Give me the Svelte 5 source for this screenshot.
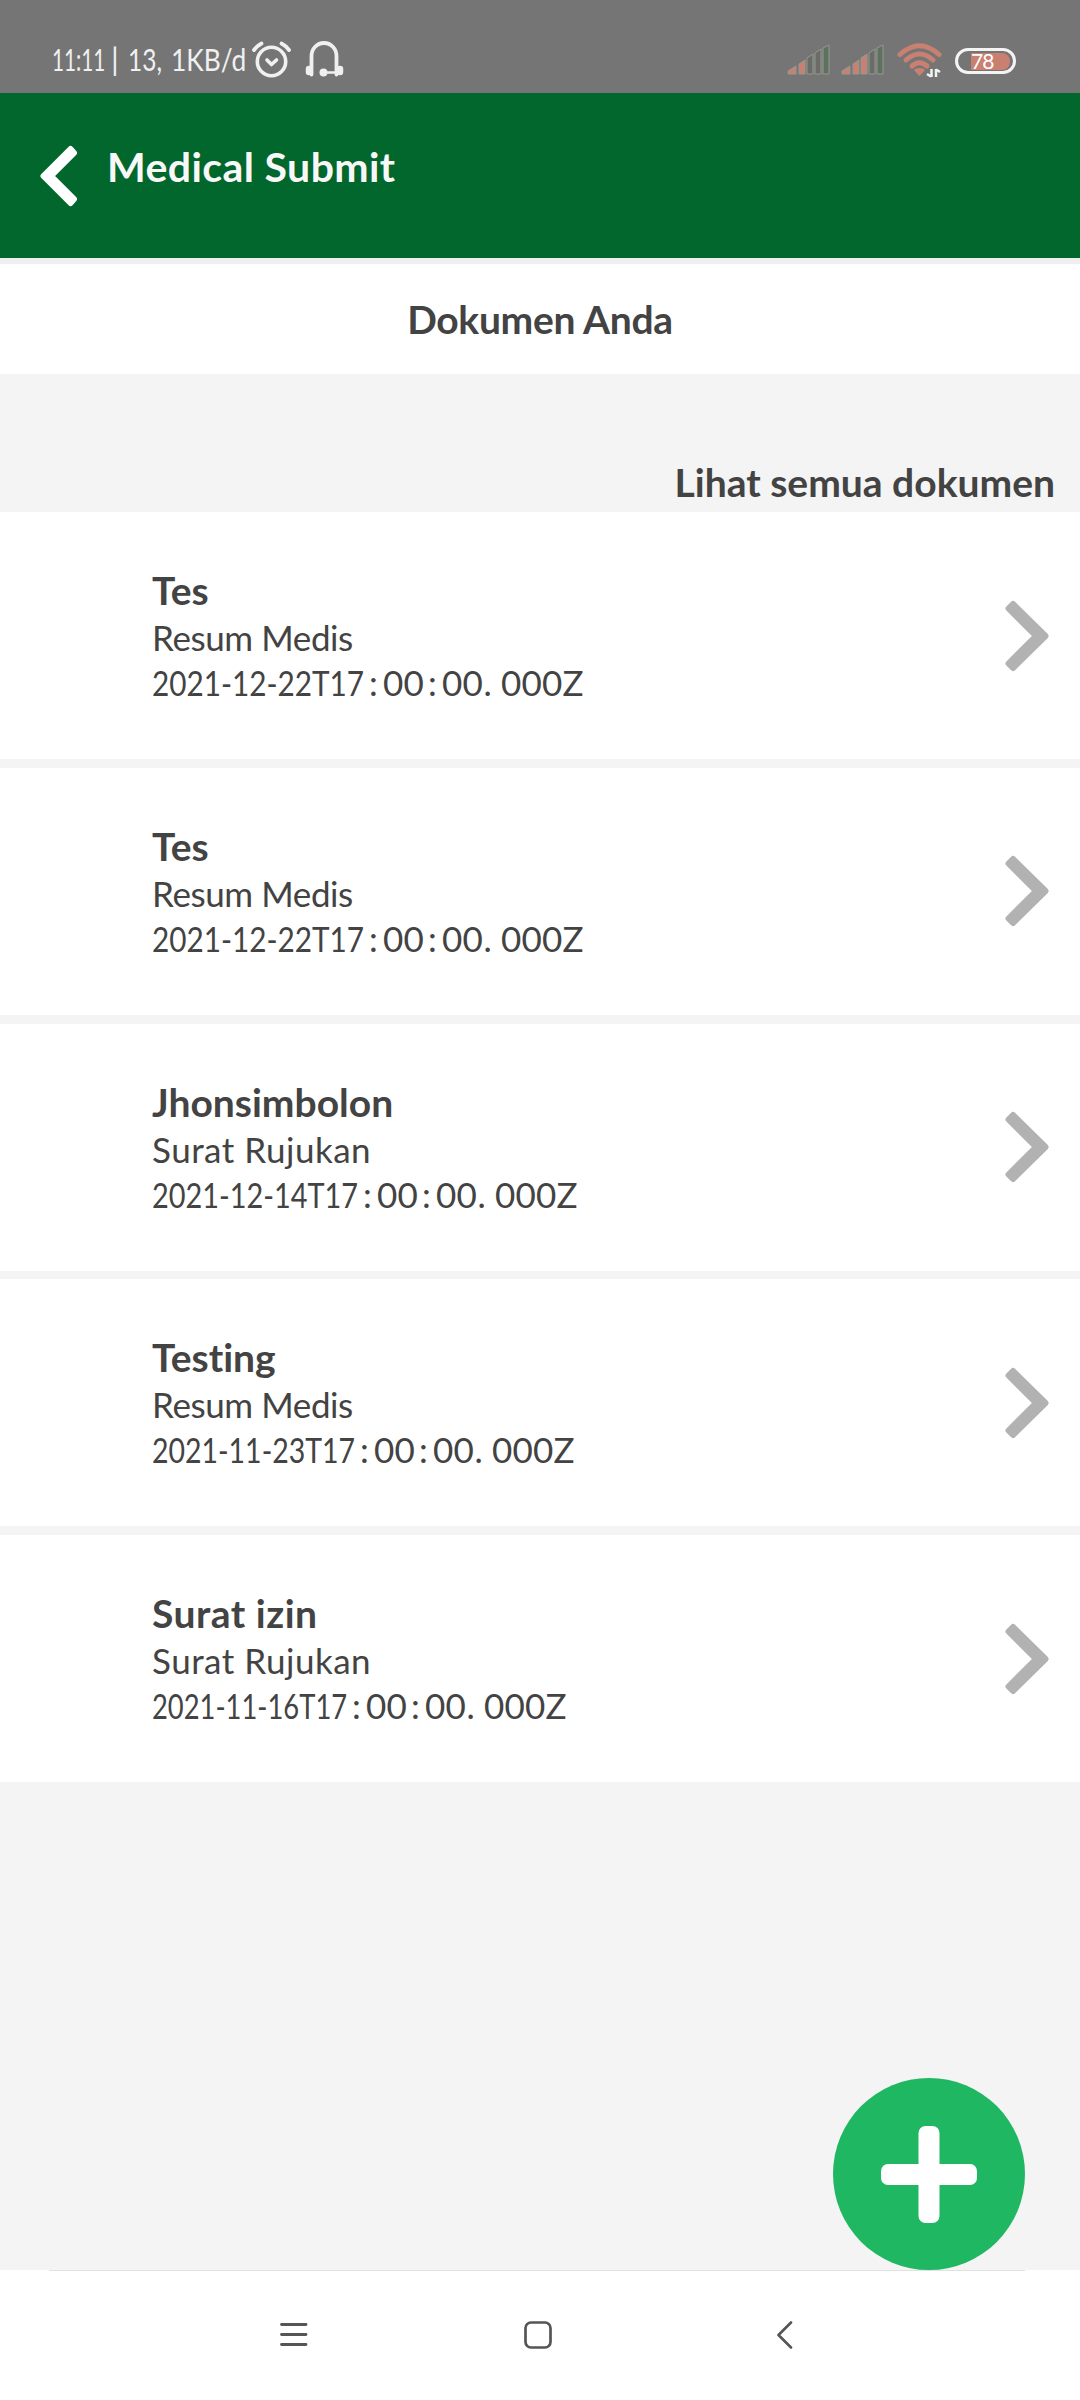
<script>
    // width = drawn length of the day part of the date
    let documents = [
        { name: "Tes", type: "Resum Medis", day: "2021-12-22T17", width: 212 },
        { name: "Tes", type: "Resum Medis", day: "2021-12-22T17", width: 212 },
        { name: "Jhonsimbolon", type: "Surat Rujukan", day: "2021-12-14T17", width: 206 },
        { name: "Testing", type: "Resum Medis", day: "2021-11-23T17", width: 203 },
        { name: "Surat izin", type: "Surat Rujukan", day: "2021-11-16T17", width: 195 }
    ];

    // length of the day at its normal width
    let fullWidth = 249.5;
    let time = ":00:00. 000Z";
    let timeOffsets = [5, 19, 39.5, 64, 78, 98.5, 119.5, 129, 137, 157.5, 178, 198.5];

    // first bars in use, the rest dimmed
    let signals = [2, 3];
    let bars = [
        "M1 30v-3l8-5v8z",
        "M12 30V20l6-4v14z",
        "M20 30V14l6-4v20z",
        "M28 30V9l6-4v25z",
        "M36 30V4l6-3v29z"
    ];
</script>

<div class="screen">
    <div class="status">
        <svg class="clock" width="193" height="42" viewBox="0 0 193 42" fill="#f0f0f0">
            <text transform="translate(0 31) scale(0.67 1)">11:11</text>
            <text transform="translate(59 31)">|</text>
            <text transform="translate(76 31) scale(0.79 1)">13,</text>
            <text transform="translate(119 31) scale(0.85 1)">1KB/d</text>
        </svg>
        <svg class="alarm" width="40" height="40" viewBox="0 0 40 40" fill="none" stroke="#f0f0f0" stroke-linecap="round">
            <circle cx="20.5" cy="21.5" r="14.2" stroke-width="3.6" />
            <path d="M16 20l4.500 4.500L25.500 20" stroke-width="3.600" stroke-linejoin="round" />
            <path d="M3 10Q6.500 5.500 10.500 3.500M38 10Q34.500 5.500 30.500 3.500" stroke-width="3.800" />
        </svg>
        <svg class="headset" width="39" height="38" viewBox="0 0 39 38" fill="none" stroke="#f0f0f0" stroke-linecap="round">
            <path d="M6.500 33.500V15a12.500 13 0 0 1 25 0v18.500" stroke-width="3.800" />
            <path d="M4 28v3M35 28v3" stroke-width="6.500" />
            <path d="M19 31.500h12" stroke-width="2.500" />
            <circle cx="18.500" cy="31.500" r="4" fill="#f0f0f0" stroke="none" />
        </svg>
        <div class="right">
            {#each signals as level}
                <svg class="signal" width="44" height="32" viewBox="0 0 44 32">
                    {#each bars as d, i}
                        <path {d} fill={i < level ? "#c98071" : i == 4 ? "#60705f" : "#6d6b66"} stroke="#929a92" stroke-width="1" stroke-linejoin="round" />
                    {/each}
                </svg>
            {/each}
            <svg class="wifi" width="46" height="36" viewBox="0 0 46 36" fill="none" stroke="#c98071" stroke-linecap="round">
                <path d="M3 11.500Q22.500-6 42 11.500" stroke-width="5" />
                <path d="M9 17Q22.500 5 36 17" stroke-width="5" />
                <path d="M15 23Q22.500 16.500 30 23" stroke-width="5" />
                <path d="M18 27q4.500-2.500 9 0l-4.500 5z" fill="#c98071" stroke-width="1.500" stroke-linejoin="round" />
                <path d="M34.500 26v8M30 31l4 2.500M39 34v-8M39 26.500l4 2.500" stroke="#f2f2f2" stroke-width="2.500" stroke-linecap="butt" />
            </svg>
            <div class="battery"><span>78</span></div>
        </div>
    </div>

    <header>
        <svg width="38" height="62" viewBox="0 0 38 62" fill="#fff" stroke="#fff" stroke-width="6" stroke-linejoin="round">
            <path d="M3.500 31L30.500 4l3.500 4L11 31l23 23-3.500 4z" />
        </svg>
        <h1>Medical Submit</h1>
    </header>

    <h2>Dokumen Anda</h2>

    <div class="all"><a href="#all">Lihat semua dokumen</a></div>

    <div class="list">
        {#each documents as doc}
            <div class="row">
                <div class="info">
                    <h3 class:wide={doc.name == "Surat izin"}>{doc.name}</h3>
                    <p class:wide={doc.type == "Surat Rujukan"}>{doc.type}</p>
                    <svg class="date" width="440" height="45" viewBox="0 0 440 45" fill="#434343">
                        <text transform="translate(0 36) scale({doc.width / fullWidth} 1)">{doc.day}</text>
                        <text y="36" x={timeOffsets.map((x) => x + doc.width).join(" ")}>{time}</text>
                    </svg>
                </div>
                <svg width="46" height="72" viewBox="0 0 46 72" fill="#b2b2b2" stroke="#b2b2b2" stroke-width="6" stroke-linejoin="round">
                    <path d="M41.500 36L9 4 4.500 8.500 32 36 4.500 63.500 9 68z" />
                </svg>
            </div>
        {/each}
    </div>

    <button class="add" aria-label="Tambah">
        <svg width="96" height="97" viewBox="0 0 96 97" fill="#fff">
            <rect x="37.500" width="21" height="97" rx="7" />
            <rect y="38" width="96" height="21" rx="7" />
        </svg>
    </button>

    <nav>
        <svg width="28" height="28" viewBox="0 0 28 28" stroke="#555" stroke-width="2.800" stroke-linecap="round">
            <path d="M1.500 3.500h24.500M1.500 13.500h24.500M1.500 23.500h24.500" />
        </svg>
        <svg width="28" height="28" viewBox="0 0 28 28" fill="none" stroke="#555" stroke-width="2.700">
            <rect x="1.500" y="1.500" width="25" height="25" rx="5.500" />
        </svg>
        <svg width="28" height="28" viewBox="0 0 28 28" fill="none" stroke="#555" stroke-width="2.600" stroke-linecap="round" stroke-linejoin="round">
            <path d="M23 1.500L10.500 14 23 26.500" />
        </svg>
    </nav>
</div>

<style>
    :global(body) {
        margin: 0;
    }

    .screen {
        position: relative;
        display: flex;
        flex-direction: column;
        width: 1080px;
        height: 2400px;
        overflow: hidden;
        background: #f4f4f4;
        color: #434343;
        font-family: Lato, sans-serif;
        font-variant-ligatures: none;
    }

    h1,
    h2,
    h3,
    p {
        margin: 0;
        white-space: nowrap;
    }

    .status {
        display: flex;
        box-sizing: border-box;
        height: 93px;
        padding: 40px 64px 0 52px;
        background: #757575;
    }

    .clock {
        margin-right: 6px;
        overflow: visible;
        font-size: 31px;
    }

    .headset {
        margin: 1px 0 0 14px;
    }

    .right {
        display: flex;
        margin-left: auto;
    }

    .signal {
        margin: 4px 10px 0 0;
    }

    .signal + .wifi {
        margin: 3px 12px 0 2px;
    }

    .battery {
        display: flex;
        box-sizing: border-box;
        width: 61px;
        height: 26px;
        margin-top: 8px;
        padding: 1.5px 3px 1.5px 13px;
        border: 3px solid #f4f4f4;
        border-radius: 13px;
    }

    .battery span {
        flex: 1;
        border-radius: 0 8px 8px 0;
        background: #c98071;
        color: #fff;
        font-size: 21px;
        line-height: 16px;
        letter-spacing: -1px;
    }

    header {
        display: flex;
        box-sizing: border-box;
        height: 171px;
        padding: 52px 0 0 40px;
        border-bottom: 6px solid #efefef;
        background: #02672c;
        color: #f8f8f8;
    }

    h1 {
        margin-left: 29px;
        font-size: 41px;
        line-height: 43px;
        letter-spacing: 0.4px;
    }

    h2 {
        height: 110px;
        background: #fff;
        font-size: 39px;
        line-height: 110px;
        letter-spacing: -0.3px;
        text-align: center;
    }

    .all {
        height: 138px;
        padding-right: 25px;
        text-align: right;
    }

    .all a {
        color: inherit;
        font-size: 39px;
        font-weight: bold;
        line-height: 216px;
        text-decoration: none;
    }

    .list {
        display: flex;
        flex-direction: column;
        gap: 8.8px;
    }

    .row {
        display: flex;
        justify-content: space-between;
        align-items: center;
        box-sizing: border-box;
        height: 247px;
        padding: 0 30px 0 152px;
        background: #fff;
    }

    h3 {
        font-size: 39px;
        line-height: 48px;
        padding-bottom: 1px;
    }

    p {
        font-size: 35px;
        line-height: 45px;
        letter-spacing: -0.4px;
    }

    .wide {
        letter-spacing: 0.5px;
    }

    .date {
        display: block;
        overflow: visible;
        font-size: 35px;
    }

    .add {
        position: absolute;
        right: 55px;
        bottom: 130px;
        display: flex;
        align-items: center;
        justify-content: center;
        width: 192px;
        height: 192px;
        padding: 0;
        border: 0;
        border-radius: 50%;
        background: #20b762;
    }

    nav {
        display: flex;
        gap: 216px;
        box-sizing: border-box;
        height: 130px;
        margin-top: auto;
        padding: 51px 0 0 280px;
        background: linear-gradient(#e2e2e2, #e2e2e2) 49px 0 / 976px 1px no-repeat #fff;
    }
</style>
